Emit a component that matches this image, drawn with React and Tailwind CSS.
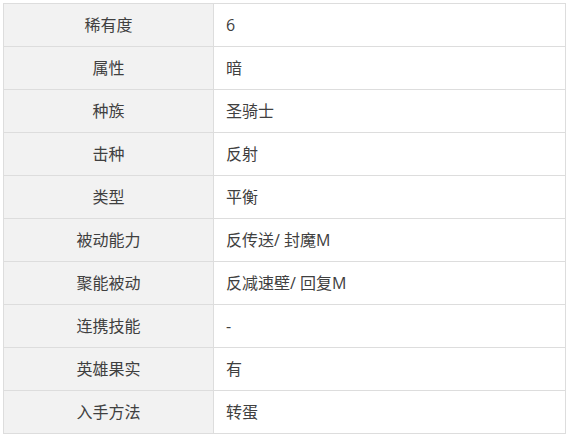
import React from 'react';

const rows = [
  ['稀有度', '6'],
  ['属性', '暗'],
  ['种族', '圣骑士'],
  ['击种', '反射'],
  ['类型', '平衡'],
  ['被动能力', '反传送/ 封魔M'],
  ['聚能被动', '反减速壁/ 回复M'],
  ['连携技能', '-'],
  ['英雄果实', '有'],
  ['入手方法', '转蛋'],
];

const App = () => {
  return (
    <div className="w-[570px] h-[436px] bg-white pt-[3px] pl-[3px]" style={{ fontFamily: '"Open Sans", "Noto Sans CJK SC", sans-serif' }}>
      <table className="w-[563px] border-collapse text-[16px] text-[#404040]">
        <tbody>
          {rows.map(([k, v]) => (
            <tr key={k} className="h-[43px]">
              <td className="w-[210px] border border-[#dddddd] bg-[#f2f2f2] text-center p-0">{k}</td>
              <td className="border border-[#dddddd] pl-[12px] p-0">{v}</td>
            </tr>
          ))}
        </tbody>
      </table>
    </div>
  );
};

export default App;
